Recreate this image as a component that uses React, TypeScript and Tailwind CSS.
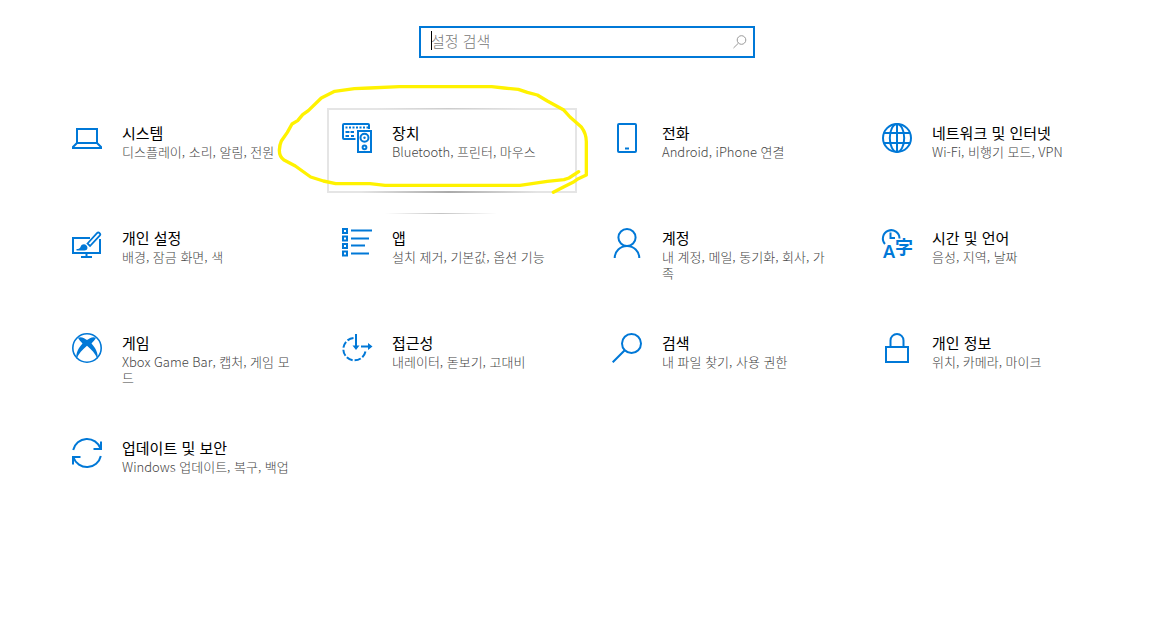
import type { ReactNode } from "react";
import clsx from "clsx";

type Category = {
  id: string;
  title: string;
  description: string;
  icon: ReactNode;
};

// Icons share a 30x30 box and take their colour from the parent.
function Icon({ children }: { children: ReactNode }) {
  return (
    <svg
      viewBox="0 0 30 30"
      className="size-[30px] shrink-0 overflow-visible text-[#0078d7]"
      fill="none"
      stroke="currentColor"
      strokeWidth="2"
      aria-hidden="true"
    >
      {children}
    </svg>
  );
}

const categories: Category[] = [
  {
    id: "system",
    title: "시스템",
    description: "디스플레이, 소리, 알림, 전원",
    icon: (
      <Icon>
        <path d="M5 6h20v14H5z" />
        <path d="M5 20l-4 4v1h28v-1l-4-4" />
      </Icon>
    ),
  },
  {
    id: "devices",
    title: "장치",
    description: "Bluetooth, 프린터, 마우스",
    icon: (
      <Icon>
        <path d="M13.5 16H2a1 1 0 0 1-1-1V2a1 1 0 0 1 1-1h24a1 1 0 0 1 1 1v4" />
        <path d="M3.5 4.5h23" strokeDasharray="2 1.5" />
        <path d="M3.5 9h4M8.500 9H12M3.500 13H7M9 13h3" />
        <path d="M16 8h13v21H16z" />
        <circle cx="22.5" cy="14.7" r="4" />
        <circle cx="22.5" cy="14.7" r="1.2" fill="currentColor" stroke="none" />
        <circle cx="22.5" cy="24.3" r="1.9" />
      </Icon>
    ),
  },
  {
    id: "phone",
    title: "전화",
    description: "Android, iPhone 연결",
    icon: (
      <Icon>
        <rect x="6" y="1" width="18" height="28" rx="1" />
        <path d="M13 25.5h4" />
      </Icon>
    ),
  },
  {
    id: "network",
    title: "네트워크 및 인터넷",
    description: "Wi-Fi, 비행기 모드, VPN",
    icon: (
      <Icon>
        <circle cx="15" cy="15" r="14" />
        <ellipse cx="15" cy="15" rx="7.2" ry="14" />
        <path d="M15 1v28M2 10h26M2 20h26" />
      </Icon>
    ),
  },
  {
    id: "personalization",
    title: "개인 설정",
    description: "배경, 잠금 화면, 색",
    icon: (
      <Icon>
        <path d="M18 10H1v15h27V11" />
        <path d="M14.5 25v4M9 29h11" />
        <path d="M15.5 15.500L25 5.200a1.800 1.800 0 0 1 2.700 2.500L18 18z" strokeWidth="1.8" />
        <path
          d="M4.500 22.500v-1.500c2.500 0 3.500-.5 4.200-2.500.8-2.300 4-3 5.800-1s1 5-2 5z"
          fill="currentColor"
          stroke="none"
        />
      </Icon>
    ),
  },
  {
    id: "apps",
    title: "앱",
    description: "설치 제거, 기본값, 옵션 기능",
    icon: (
      <Icon>
        <path d="M1 1h4v4H1zM1 8.500h4v4H1zM1 16h4v4H1zM1 23.500h4v4H1z" />
        <path d="M9 2.500h21M9 10.500h18M9 17.500h14M9 25.500h18" />
      </Icon>
    ),
  },
  {
    id: "accounts",
    title: "계정",
    description: "내 계정, 메일, 동기화, 회사, 가족",
    icon: (
      <Icon>
        <circle cx="15" cy="9.5" r="8.600" />
        <path d="M2.700 30a12.300 12 0 0 1 24.600 0" />
      </Icon>
    ),
  },
  {
    id: "time",
    title: "시간 및 언어",
    description: "음성, 지역, 날짜",
    icon: (
      <Icon>
        <path d="M3 16A8.300 8.300 0 1 1 17.500 10.500" />
        <path d="M8.500 4.500V10H13" />
        <g fill="currentColor" stroke="none" className="font-['Noto_Sans','Noto_Sans_CJK_KR',sans-serif]">
          <text x="1" y="30" fontSize="18" className="font-semibold">A</text>
          <text x="13" y="26" fontSize="18" className="font-bold">字</text>
        </g>
      </Icon>
    ),
  },
  {
    id: "gaming",
    title: "게임",
    description: "Xbox Game Bar, 캡처, 게임 모드",
    icon: (
      <Icon>
        <circle cx="15" cy="15" r="14.2" strokeWidth="1.600" />
        <path
          d="M6 4.800C9 3 13 5.500 15 7c2-1.500 6-4 9-2.200-1 2-2.800 4-4.500 5.700 4 4.500 7 9.500 6 15.500C23.500 21 19.500 16.500 15 12.800 10.500 16.500 6.500 21 4.500 26c-1-6 2-11 6-15.500C8.800 8.800 7 6.800 6 4.800z"
          fill="currentColor"
          stroke="none"
        />
      </Icon>
    ),
  },
  {
    id: "accessibility",
    title: "접근성",
    description: "내레이터, 돋보기, 고대비",
    icon: (
      <Icon>
        <path d="M11.500 5A11.200 11.200 0 1 0 23.700 17" strokeDasharray="6.500 2" />
        <path d="M14 1v13M19 13.500h8" />
        <path d="M10.500 12.500h7L14 17zM26 10v7l4.500-3.500z" fill="currentColor" stroke="none" />
      </Icon>
    ),
  },
  {
    id: "search",
    title: "검색",
    description: "내 파일 찾기, 사용 권한",
    icon: (
      <Icon>
        <circle cx="19.5" cy="10.5" r="9.5" />
        <path d="M12.700 17.200L.7 29.300" />
      </Icon>
    ),
  },
  {
    id: "privacy",
    title: "개인 정보",
    description: "위치, 카메라, 마이크",
    icon: (
      <Icon>
        <path d="M4 14h22v15H4z" />
        <path d="M8.500 14V7.500a6.500 6.500 0 0 1 13 0V14" />
      </Icon>
    ),
  },
  {
    id: "update",
    title: "업데이트 및 보안",
    description: "Windows 업데이트, 복구, 백업",
    icon: (
      <Icon>
        <path d="M1.200 12A14.200 14.200 0 0 1 28.500 10.500M28.800 18A14.200 14.200 0 0 1 1.500 19.500" />
        <path d="M29 3.500v7.500h-7.500M1 26.500V19h7.500" />
      </Icon>
    ),
  },
];

function PenMark() {
  return (
    <svg
      viewBox="0 0 990 450"
      className="pointer-events-none absolute -top-[35px] -left-[59px] z-10 h-[150px] w-[330px] max-w-none"
      fill="none"
      stroke="#fff200"
      strokeWidth="10"
      strokeLinecap="round"
      strokeLinejoin="round"
      aria-hidden="true"
    >
      <path d="M926 290L897 309 882 314 832 319 750 331H345L300 326H197L160 318 122 306 76 273 42 255Q28 246 28 226 29 208 34 198L52 172 66 147 83 137 98 119 115 107 154 69 194 49 253 41 299 39 388 35H665L702 39 745 43 772 52 802 60 832 78 880 104 900 126 934 156Q949 176 949 200V300L925 311 912 320 882 335 850 352" />
    </svg>
  );
}

function CategoryTile({ category }: { category: Category }) {
  const hovered = category.id === "devices";

  return (
    <a
      href={`#${category.id}`}
      className={clsx(
        "relative flex h-[85px] items-start gap-5 border-2 p-[13px]",
        hovered ? "border-[#e5e5e5]" : "border-transparent",
      )}
    >
      {category.icon}
      <span className="min-w-0 flex-1">
        <span className="block text-[15px] leading-5 font-normal text-black">{category.title}</span>
        <span className="mt-px block text-[13px] leading-4 text-[#444]">{category.description}</span>
      </span>

      {/* Pointer light along the edges */}
      {hovered && (
        <>
          <span className="absolute -top-0.5 left-12 h-px w-36 bg-linear-to-r from-transparent via-[#ccc] to-transparent" />
          <span className="absolute -bottom-0.5 left-8 h-0.5 w-44 bg-linear-to-r from-transparent via-[#aaa] to-transparent" />
          <PenMark />
        </>
      )}
      {category.id === "apps" && (
        <span className="absolute -top-0.5 left-14 h-px w-28 bg-linear-to-r from-transparent via-[#c4c4c4] to-transparent" />
      )}
    </a>
  );
}

export default function App() {
  return (
    <main
      lang="ko"
      className="min-h-screen bg-white pt-[26px] pb-10 pl-2 font-['Noto_Sans_CJK_KR',sans-serif] font-light"
    >
      {/* Search */}
      <form role="search" className="relative mx-auto w-full max-w-[336px]">
        <input
          type="text"
          aria-label="설정 검색"
          placeholder="설정 검색"
          className="block h-8 w-full border-2 border-[#0078d7] bg-white pr-9 pb-1 pl-[10px] text-[15px] text-black outline-none placeholder:text-[#777]"
        />
        <span className="absolute top-[5px] left-3 h-[19px] w-px bg-black" />
        <button type="submit" aria-label="검색" className="absolute top-2 right-[7px] size-4">
          <svg viewBox="0 0 16 16" className="size-4" fill="none" stroke="#999" strokeWidth="1" aria-hidden="true">
            <circle cx="9.5" cy="6" r="4.300" />
            <path d="M6.400 9.200L1.500 14" />
          </svg>
        </button>
      </form>

      {/* Categories */}
      <nav
        aria-label="설정"
        className="mx-auto mt-[50px] grid max-w-[1060px] grid-cols-[repeat(auto-fill,minmax(250px,1fr))] gap-5"
      >
        {categories.map((category) => (
          <CategoryTile key={category.id} category={category} />
        ))}
      </nav>
    </main>
  );
}
